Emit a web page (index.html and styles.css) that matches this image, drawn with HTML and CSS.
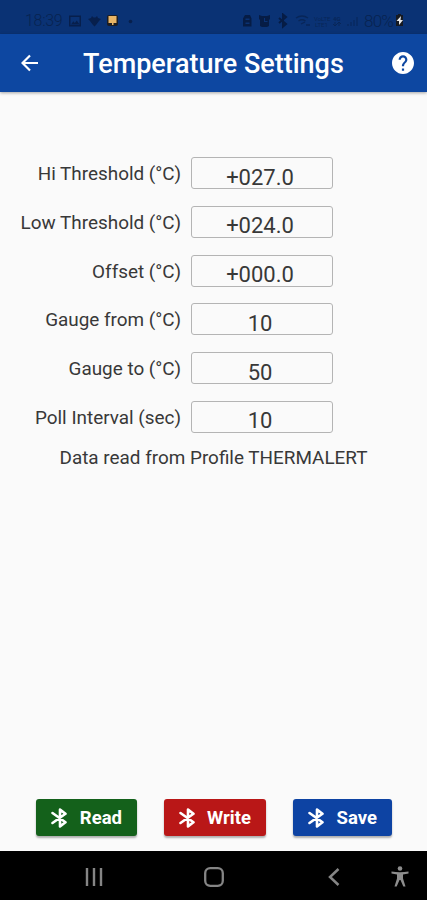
FILE: index.html
```html
<!DOCTYPE html>
<html lang="en">
<head>
<meta charset="utf-8">
<title>Temperature Settings</title>
<meta name="viewport" content="width=device-width, initial-scale=1">
<link rel="stylesheet" href="styles.css">
</head>
<body>

    <!-- icons used more than once -->
    <svg class="defs">
        <symbol id="bluetooth" viewBox="0 0 17 20">
            <path d="M1.5 5 L14.5 14.3 L9 18.4 V1.6 L14.5 5.7 L1.5 15" fill="none" stroke="currentColor" stroke-width="2.6" stroke-linejoin="round" stroke-linecap="round"/>
        </symbol>
    </svg>

    <div class="status">
        <span class="clock">18:39</span>
        <svg class="notifications" width="70" height="16" viewBox="0 0 70 16">
            <path fill="#071f4c" fill-rule="evenodd" d="M1 2.5h12v11H1zM2.500 4v8h9V4zM3 11.500h8.500l-2.700-4-2 2.400-1.500-1.600z"/>
            <path fill="#071f4c" d="M20 6l3-1 1-2 1.500 1.500h2L29 3l1 2 3 1-2 2-3 4-1.500 1.500L25 12l-3-4z"/>
            <rect x="39" y="2" width="11" height="11" rx="2" fill="#1d1d22"/>
            <path fill="#e9b566" d="M40.500 3h8v7h-3v2h-1.500v-2h-3.500z"/>
            <circle cx="62.500" cy="8.500" r="1.800" fill="#071f4c"/>
        </svg>
        <svg class="signals" width="120" height="16" viewBox="0 0 120 16">
            <path fill="#061c45" fill-rule="evenodd" d="M1 13.500v-8l2-3.500h5l1.500 3.500v8zM3.500 7h4V5.500h-4zM3.500 11h4V9.500h-4z"/>
            <path fill="#061c45" fill-rule="evenodd" d="M17 2l3 1h5l3-1v4l-1 1v6l-2 1h-5l-2-1V7l-1-1zM22 5v4h3.500V8H23V5z"/>
            <path d="M37 5l7 6-3 2.500v-12l3 2.500-7 6" fill="none" stroke="#061c45" stroke-width="2"/>
            <path d="M54 5q6-4 12 0M56.500 8q3.500-2.500 7 0M59 11l4-2M64 12h4" fill="none" stroke="#082658" stroke-width="1.300"/>
            <text x="72" y="8" class="tiny">VoLTE</text>
            <text x="73" y="14" class="tiny">LTE1</text>
            <text x="91" y="8" class="tiny bold">4G</text>
            <path d="M93 9v4m-2-2l2 2 2-2M97 13V9m-2 2l2-2 2 2" fill="none" stroke="#082658"/>
            <path d="M106 13v-2M109 13v-4M112 13V7M115 13V4" stroke="#082a60" stroke-width="1.500"/>
        </svg>
        <span class="percent">80%</span>
        <svg class="battery" width="9" height="13" viewBox="0 0 9 13">
            <path fill="#161a22" d="M3 0h3v1h2v11H1V1h2z"/>
            <path fill="#e8e8e8" d="M6 2L1.500 7H4v4l4-5H5.500z"/>
        </svg>
    </div>

    <div class="appbar">
        <svg class="back" width="18" height="18" viewBox="0 0 18 18">
            <path d="M17 9H1.500M9 1.500L1.500 9 9 16.500" fill="none" stroke="#fff" stroke-width="2.200"/>
        </svg>
        <h1>Temperature Settings</h1>
        <svg class="help" width="22" height="22" viewBox="2 2 20 20">
            <path fill="#fff" d="M12 2C6.480 2 2 6.480 2 12s4.480 10 10 10 10-4.480 10-10S17.520 2 12 2zm1 17h-2v-2h2v2zm2.070-7.750l-.9.920C13.450 12.900 13 13.500 13 15h-2v-.5c0-1.100.45-2.100 1.170-2.830l1.240-1.260c.37-.36.59-.86.59-1.410 0-1.100-.9-2-2-2s-2 .9-2 2H8c0-2.210 1.790-4 4-4s4 1.790 4 4c0 .88-.36 1.680-.93 2.250z"/>
        </svg>
    </div>

    <div class="content">
        <div class="field">
            <label for="hi">Hi Threshold (°C)</label>
            <input id="hi" type="text" value="+027.0">
        </div>
        <div class="field">
            <label for="low">Low Threshold (°C)</label>
            <input id="low" type="text" value="+024.0">
        </div>
        <div class="field">
            <label for="offset">Offset (°C)</label>
            <input id="offset" type="text" value="+000.0">
        </div>
        <div class="field">
            <label for="from">Gauge from (°C)</label>
            <input id="from" type="text" value="10">
        </div>
        <div class="field">
            <label for="to">Gauge to (°C)</label>
            <input id="to" type="text" value="50">
        </div>
        <div class="field">
            <label for="poll">Poll Interval (sec)</label>
            <input id="poll" type="text" value="10">
        </div>
        <p class="message">Data read from Profile THERMALERT</p>
    </div>

    <div class="actions">
        <button class="read"><svg><use href="#bluetooth"/></svg>Read</button>
        <button class="write"><svg><use href="#bluetooth"/></svg>Write</button>
        <button class="save"><svg><use href="#bluetooth"/></svg>Save</button>
    </div>

    <div class="navbar">
        <svg class="recents" width="18" height="18" viewBox="0 0 18 18">
            <path d="M2 0v18M9 0v18M16 0v18" stroke="#858585" stroke-width="2.400"/>
        </svg>
        <svg class="home" width="20" height="20" viewBox="0 0 20 20">
            <rect x="1.200" y="1.200" width="17.600" height="17.600" rx="5" fill="none" stroke="#858585" stroke-width="2.300"/>
        </svg>
        <svg class="previous" width="12" height="18" viewBox="0 0 12 18">
            <path d="M10.500 1L2 9l8.500 8" fill="none" stroke="#858585" stroke-width="2.500"/>
        </svg>
        <svg class="access" width="18" height="21" viewBox="0 0 18 21">
            <circle cx="9" cy="2.500" r="2.300" fill="#8d8d8d"/>
            <path fill="#8d8d8d" d="M.5 5.500Q9 7 17.500 5.500v2L12 8.500v4l2.500 8h-2.200L9.500 14h-1l-2.800 6.500H3.500l2.500-8v-4L.5 7.500z"/>
        </svg>
    </div>

</body>
</html>
```
FILE: styles.css
```css
* {
    box-sizing: border-box;
}

body {
    margin: 0;
    height: 900px;
    display: flex;
    flex-direction: column;
    background: #fafafa;
    font-family: Roboto, sans-serif;
    color: #383838;
}

.defs {
    display: none;
}

/* Android status bar */
.status {
    height: 34px;
    padding: 7px 22px 0 25px;
    display: flex;
    align-items: center;
    background: #0a3274;
    color: #082350;
    font-size: 17px;
}

.clock {
    width: 39px;
    font-size: 16px;
    font-weight: 300;
    letter-spacing: -0.3px;
}

.notifications {
    margin-left: 4px;
}

.signals {
    margin-left: auto;
}

.percent {
    margin-left: 2px;
    width: 31px;
    font-weight: 300;
    letter-spacing: -0.8px;
}

.battery {
    margin-right: 1px;
}

.tiny {
    font-size: 6px;
    fill: #082658;
}

.bold {
    font-weight: bold;
}

/* App bar */
.appbar {
    height: 58px;
    padding: 0 13px 0 21px;
    display: flex;
    align-items: center;
    background: #0d47a1;
    box-shadow: 0 1px 3px rgba(0, 0, 0, 0.35);
}

.appbar h1 {
    margin: 0 auto 0 44px;
    padding-top: 1px;
    color: #fff;
    font-size: 27px;
    font-weight: 500;
    white-space: nowrap;
}

/* Settings form */
.content {
    flex: 1;
    padding-top: 65px;
}

.field {
    height: 48.8px;
    display: flex;
    align-items: flex-start;
}

.field label {
    width: 181px;
    margin-right: 10px;
    font-size: 18.9px;
    line-height: 34px;
    text-align: right;
    white-space: nowrap;
}

.field input {
    width: 142px;
    height: 32px;
    padding: 8px 4px 0 0;
    border: 1px solid #b4b4b4;
    border-radius: 3px;
    background: transparent;
    color: #383838;
    font-family: inherit;
    font-size: 22px;
    text-align: center;
}

.message {
    margin: -4px 0 0;
    font-size: 18.9px;
    line-height: 24px;
    text-align: center;
}

/* Bottom buttons */
.actions {
    height: 52px;
    padding: 0 35px 0 36px;
    display: flex;
    justify-content: space-between;
    align-items: flex-start;
}

.actions button {
    height: 37px;
    padding: 0 15px;
    display: flex;
    align-items: center;
    justify-content: space-between;
    border: 0;
    border-radius: 3px;
    box-shadow: 0 2px 2px rgba(0, 0, 0, 0.3);
    color: #fff;
    font-family: inherit;
    font-size: 18.5px;
    font-weight: 700;
}

.actions svg {
    width: 17px;
    height: 20px;
}

.actions .read {
    width: 101px;
    background: #14611b;
}

.actions .write {
    width: 102px;
    background: #b91717;
}

.actions .save {
    width: 99px;
    background: #0d43a3;
}

/* Android navigation bar */
.navbar {
    height: 49px;
    padding: 2px 18px 0 85px;
    display: flex;
    align-items: center;
    background: #000;
}

.home {
    margin-left: 101px;
}

.previous {
    margin-left: 104px;
}

.access {
    margin-left: auto;
}
```
